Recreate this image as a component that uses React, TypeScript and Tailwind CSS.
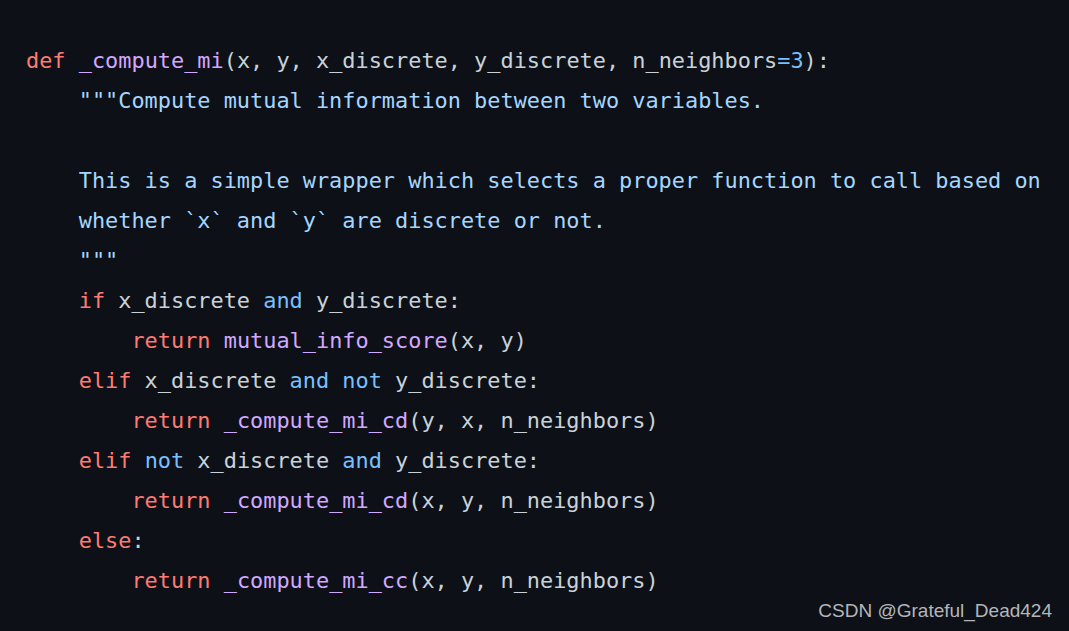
import React from "react";

type Tok = [string, string];
const R = "text-[#ff7b72]";
const P = "text-[#d2a8ff]";
const S = "text-[#a5d6ff]";
const B = "text-[#79c0ff]";
const T = "text-[#c9d1d9]";

const lines: Tok[][] = [
  [[R, "def"], [T, " "], [P, "_compute_mi"], [T, "(x, y, x_discrete, y_discrete, n_neighbors"], [B, "=3"], [T, "):"]],
  [[T, "    "], [S, '"""Compute mutual information between two variables.']],
  [],
  [[S, "    This is a simple wrapper which selects a proper function to call based on"]],
  [[S, "    whether `x` and `y` are discrete or not."]],
  [[S, '    """']],
  [[T, "    "], [R, "if"], [T, " x_discrete "], [B, "and"], [T, " y_discrete:"]],
  [[T, "        "], [R, "return"], [T, " "], [P, "mutual_info_score"], [T, "(x, y)"]],
  [[T, "    "], [R, "elif"], [T, " x_discrete "], [B, "and"], [T, " "], [B, "not"], [T, " y_discrete:"]],
  [[T, "        "], [R, "return"], [T, " "], [P, "_compute_mi_cd"], [T, "(y, x, n_neighbors)"]],
  [[T, "    "], [R, "elif"], [T, " "], [B, "not"], [T, " x_discrete "], [B, "and"], [T, " y_discrete:"]],
  [[T, "        "], [R, "return"], [T, " "], [P, "_compute_mi_cd"], [T, "(x, y, n_neighbors)"]],
  [[T, "    "], [R, "else"], [T, ":"]],
  [[T, "        "], [R, "return"], [T, " "], [P, "_compute_mi_cc"], [T, "(x, y, n_neighbors)"]],
];

export default function App() {
  return (
    <div className="relative w-[1069px] h-[631px] bg-[#0d1117] overflow-hidden">
      <pre
        className="pt-[41px] pl-[26px] m-0 text-[21.9px] leading-[40px] whitespace-pre"
        style={{ fontFamily: '"DejaVu Sans Mono", monospace' }}
      >
        {lines.map((l, i) => (
          <div key={i} className="h-[40px]">
            {l.map(([c, t], j) => (
              <span key={j} className={c}>
                {t}
              </span>
            ))}
          </div>
        ))}
      </pre>
      <div
        className="absolute right-[17px] bottom-[9px] text-[19px] leading-[22px] text-[#b4b6ba]"
        style={{ fontFamily: '"Liberation Sans", Arial, sans-serif' }}
      >
        CSDN @Grateful_Dead424
      </div>
    </div>
  );
}
